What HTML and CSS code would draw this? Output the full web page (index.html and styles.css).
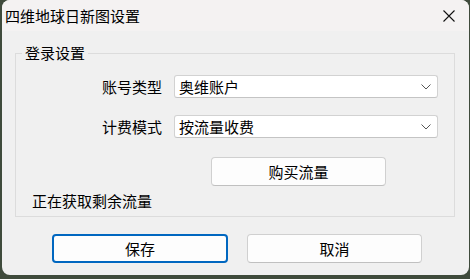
FILE: index.html
```html
<!DOCTYPE html>
<html lang="zh-CN">
<head>
<meta charset="utf-8">
<link rel="stylesheet" href="styles.css">
</head>
<body>
<div class="window">
  <div class="titlebar">
    <span class="title">四维地球日新图设置</span>
    <span class="close">
      <svg width="12" height="12" viewBox="0 0 12 12"><path d="M0.5 0.5 L11.5 11.5 M11.5 0.5 L0.5 11.5" stroke="#111" stroke-width="1.1" fill="none"/></svg>
    </span>
  </div>
  <div class="content">
    <fieldset class="group">
      <legend class="legend">登录设置</legend>
      <div class="form">
        <span class="label">账号类型</span>
        <div class="combo"><span>奥维账户</span><svg class="chev" width="10" height="6" viewBox="0 0 10 6"><path d="M0.5 0.5 L5 5 L9.5 0.5" stroke="#555" stroke-width="1" fill="none"/></svg></div>
        <span class="label">计费模式</span>
        <div class="combo"><span>按流量收费</span><svg class="chev" width="10" height="6" viewBox="0 0 10 6"><path d="M0.5 0.5 L5 5 L9.5 0.5" stroke="#555" stroke-width="1" fill="none"/></svg></div>
        <span></span>
        <button class="btn buy">购买流量</button>
      </div>
      <div class="status">正在获取剩余流量</div>
    </fieldset>
    <div class="actions">
      <button class="btn save">保存</button>
      <button class="btn cancel">取消</button>
    </div>
  </div>
</div>
</body>
</html>
```
FILE: styles.css
```css
html, body {
  margin: 0;
  padding: 0;
}
body {
  width: 470px;
  height: 279px;
  background: #3f4b3c;
  font-family: "Noto Sans CJK SC", "Noto Sans", sans-serif;
  font-size: 15px;
  color: #000;
  overflow: hidden;
}
.window {
  margin-left: 2px;
  width: 467px;
  height: 275px;
  background: #f0f0f0;
  border-radius: 8px;
  overflow: hidden;
  display: flex;
  flex-direction: column;
}
.titlebar {
  height: 31px;
  flex: none;
  background: #f4f2f2;
  display: flex;
  align-items: center;
  justify-content: space-between;
  padding: 0 14px 0 3px;
}
.title {
  line-height: 20px;
  padding-top: 1px;
}
.close {
  display: flex;
  width: 12px;
  height: 12px;
  margin-top: 1px;
}
.content {
  flex: 1;
  display: flex;
  flex-direction: column;
  padding: 12px 0 0 13px;
}
.group {
  margin: 0;
  width: 440px;
  height: 174px;
  box-sizing: border-box;
  border: 1px solid #dcdcdc;
  padding: 0 16px 0 6px;
}
.legend {
  padding: 0 3px;
  line-height: 20px;
}
.form {
  display: grid;
  grid-template-columns: 1fr 264px;
  column-gap: 12px;
  row-gap: 17px;
  align-items: center;
  margin-top: 12px;
}
.form > .btn {
  margin-top: 2px;
}
.label {
  text-align: right;
  line-height: 20px;
}
.combo {
  height: 23px;
  box-sizing: border-box;
  background: #fff;
  border: 1px solid #d2d2d2;
  border-bottom-color: #c4c4c4;
  border-radius: 3px;
  display: flex;
  align-items: center;
  justify-content: space-between;
  padding: 0 6px 0 4px;
  line-height: 20px;
}
.chev {
  display: block;
}
.btn {
  font: inherit;
  color: #000;
  background: #fdfdfd;
  border: 1px solid #d0d0d0;
  border-bottom-color: #c0c0c0;
  border-radius: 4px;
  height: 29px;
  padding: 0;
  line-height: 20px;
}
.buy {
  width: 175px;
  margin-left: 37px;
}
.status {
  margin-top: 5px;
  padding-left: 10px;
  line-height: 20px;
}
.actions {
  display: flex;
  gap: 19px;
  margin-top: 17px;
  padding-left: 37px;
}
.save {
  width: 176px;
  border: 2px solid #0067c0;
}
.cancel {
  width: 175px;
}
```
